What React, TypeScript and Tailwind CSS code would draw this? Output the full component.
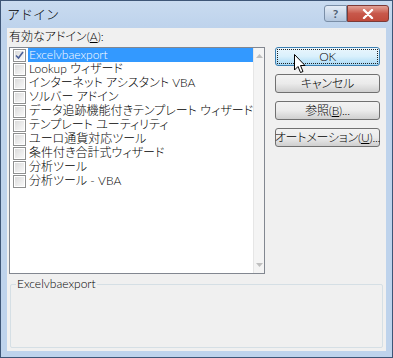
import React from "react";

const items = [
  "Excelvbaexport",
  "Lookup ウィザード",
  "インターネット アシスタント VBA",
  "ソルバー アドイン",
  "データ追跡機能付きテンプレート ウィザード",
  "テンプレート ユーティリティ",
  "ユーロ通貨対応ツール",
  "条件付き合計式ウィザード",
  "分析ツール",
  "分析ツール - VBA",
];

function Checkbox({ checked }: { checked?: boolean }) {
  return (
    <div className="w-[13px] h-[13px] border border-[#8e8f8f] bg-white p-px shrink-0">
      <div className="w-full h-full bg-gradient-to-br from-[#dcdcdc] to-[#f8f8f8] flex items-center justify-center">
        {checked && (
          <svg width="9" height="9" viewBox="0 0 9 9">
            <path d="M1 4.5 L3.5 7 L8 1" fill="none" stroke="#4a5f97" strokeWidth="1.6" />
          </svg>
        )}
      </div>
    </div>
  );
}

function Button({ label, def }: { label: React.ReactNode; def?: boolean }) {
  return (
    <div
      className={
        "h-[19px] w-[105px] rounded-[3px] border flex items-center justify-center p-px " +
        (def
          ? "border-[#3c7fb1] bg-gradient-to-b from-[#eaf6fd] via-[#d9f0fc] to-[#a7d9f5]"
          : "border-[#707070] bg-gradient-to-b from-[#f2f2f2] via-[#ebebeb] to-[#cfcfcf]")
      }
    >
      <div
        className={
          "w-full h-full flex items-center justify-center text-[12px] leading-none text-black whitespace-nowrap tracking-[-0.2px] " +
          (def ? "border border-dotted border-[#222]" : "")
        }
      >
        {label}
      </div>
    </div>
  );
}

export default function App() {
  return (
    <div
      className="w-[393px] h-[358px] flex flex-col border border-[#3e5677] bg-[#bed3ec] text-black font-light [font-feature-settings:'palt'] overflow-hidden"
      style={{ fontFamily: 'Lato, "Noto Sans CJK JP", sans-serif' }}
    >
      {/* title bar */}
      <div className="h-[26px] flex items-start justify-between pl-[6px] pr-[3px] bg-gradient-to-b from-[#c9dbf0] to-[#bed3ec]">
        <span className="text-[13px] leading-[26px] text-black [font-feature-settings:normal]">アドイン</span>
        <div className="flex mt-[4px]">
          <div className="w-[23px] h-[17px] border border-[#7a8ea7] rounded-l-[3px] bg-gradient-to-b from-[#e4ecf6] to-[#b3c6de] flex items-center justify-center text-[12px] font-bold text-[#4d5d73] leading-none">
            ?
          </div>
          <div className="w-[42px] h-[17px] border border-[#7d3a36] rounded-r-[3px] bg-gradient-to-b from-[#e2a196] via-[#c8584b] to-[#c04a3b] flex items-center justify-center">
            <svg width="12" height="10" viewBox="0 0 12 10">
              <path d="M2 1 L10 9 M10 1 L2 9" stroke="#fff" strokeWidth="2.4" strokeLinecap="round" />
            </svg>
          </div>
        </div>
      </div>

      {/* client area */}
      <div className="flex-1 mx-[6px] mb-[6px] mt-px bg-[#f0f0f0] flex flex-col pl-[2px] pr-[4px] pt-[2px]">
        <div className="text-[12px] leading-[14px] h-[14px] whitespace-nowrap">
          有効なアドイン(<span className="underline">A</span>):
        </div>
        <div className="flex mt-[3px] gap-[10px]">
          {/* list box */}
          <div className="w-[256px] h-[227px] border border-[#828790] bg-white flex">
            <div className="flex-1 flex flex-col">
              {items.map((t, i) => (
                <div key={t} className="h-[14px] flex items-center pl-[3px] overflow-hidden">
                  <Checkbox checked={i === 0} />
                  <span
                    className={
                      "ml-[2px] flex-1 h-[14px] text-[12px] leading-[14px] pl-[1px] whitespace-nowrap " +
                      (i === 0 ? "bg-[#3399ff] text-white" : "")
                    }
                  >
                    {t}
                  </span>
                </div>
              ))}
            </div>
            {/* disabled scrollbar */}
            <div className="w-[17px] bg-[#f4f4f4] border-l border-[#e6e6e6] flex flex-col justify-between items-center py-[6px]">
              <svg width="7" height="4" viewBox="0 0 7 4">
                <path d="M0 4 L3.5 0 L7 4 Z" fill="#bfbfbf" />
              </svg>
              <svg width="7" height="4" viewBox="0 0 7 4">
                <path d="M0 0 L7 0 L3.5 4 Z" fill="#bfbfbf" />
              </svg>
            </div>
          </div>

          {/* buttons */}
          <div className="flex flex-col gap-[8px] relative">
            <Button def label="OK" />
            <Button label="キャンセル" />
            <Button
              label={
                <>
                  参照(<span className="underline">B</span>)...
                </>
              }
            />
            <Button
              label={
                <>
                  オートメーション(<span className="underline">U</span>)...
                </>
              }
            />
            {/* mouse cursor */}
            <svg className="absolute left-[19px] top-[7px]" width="12" height="19" viewBox="0 0 12 19">
              <path d="M0.5 0.5 L0.5 16 L4 12.5 L6.5 18.5 L9 17.5 L6.5 11.5 L11 11.5 Z" fill="#fff" stroke="#000" strokeWidth="1" />
            </svg>
          </div>
        </div>

        {/* description group */}
        <div className="relative mt-[10px] ml-[1px] w-[373px] h-[64px] border border-[#d5dfe5] rounded-[2px]">
          <span className="absolute -top-[8px] left-[5px] bg-[#f0f0f0] text-[12px] leading-[14px] px-[1px]">
            Excelvbaexport
          </span>
        </div>
      </div>
    </div>
  );
}
